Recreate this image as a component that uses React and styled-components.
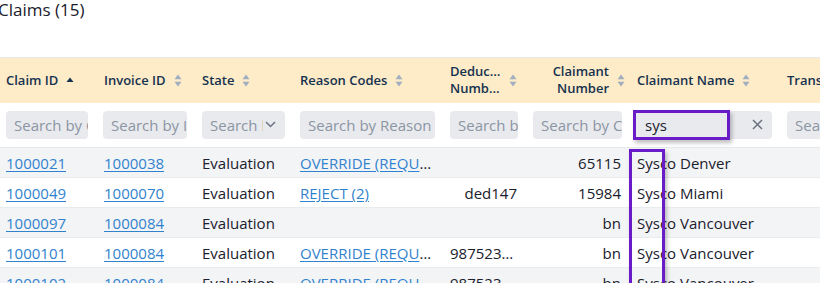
import React from "react";
import styled, { createGlobalStyle } from "styled-components";

const Global = createGlobalStyle`
  html, body {
    margin: 0;
    padding: 0;
    background: #fff;
    overflow: hidden;
    font-family: "Open Sans", "Noto Sans", sans-serif;
    color: #1a202c;
  }
`;

const Page = styled.div`
  width: 820px;
  height: 283px;
  overflow: hidden;
  position: relative;
`;

const Title = styled.h2`
  margin: 0 0 0 -2px;
  height: 57px;
  font-size: 17px;
  font-weight: 400;
  line-height: 20px;
  color: #1a202c;
`;

const Table = styled.table`
  border-collapse: collapse;
  table-layout: fixed;
  width: 931px;
  font-size: 15px;
`;

const HeadRow = styled.tr`
  background: #feebc8;
  border-top: 1px solid #e6e8ec;
  height: 45px;
`;

const Th = styled.th`
  padding: 0 6px;
  text-align: left;
  font-size: 13px;
  font-weight: 600;
  color: #15324f;
  white-space: nowrap;
  vertical-align: middle;
`;

const HeadInner = styled.div`
  display: flex;
  align-items: center;
  justify-content: ${(p) => (p.$right ? "flex-end" : "flex-start")};
  gap: 8px;
`;

const HeadLines = styled.div`
  display: flex;
  flex-direction: column;
  align-items: ${(p) => (p.$right ? "flex-end" : "flex-start")};
  line-height: 17px;
  text-align: ${(p) => (p.$right ? "right" : "left")};
`;

const Clip = styled.span`
  display: block;
  max-width: ${(p) => p.$w}px;
  overflow: hidden;
  text-overflow: ellipsis;
`;

const FilterRow = styled.tr`
  height: 45px;
  border-bottom: 1px solid #e6e8ec;
`;

const Fd = styled.td`
  padding: 0 0 0 ${(p) => p.$pl || 6}px;
  vertical-align: middle;
`;

const Field = styled.div`
  width: ${(p) => p.$w}px;
  height: 28px;
  border-radius: 4px;
  background: #e8eaee;
  display: flex;
  align-items: center;
  padding: 0 ${(p) => (p.$icon ? 9 : 0)}px 0 8px;
  box-sizing: border-box;
  color: ${(p) => (p.$filled ? "#1a202c" : "#8c95a3")};
  font-size: 15px;
  overflow: hidden;
  white-space: nowrap;
  gap: 2px;
`;

const FieldText = styled.span`
  flex: 1;
  overflow: hidden;
  padding-left: ${(p) => p.$indent || 0}px;
`;

const Row = styled.tr`
  height: 30px;
  background: ${(p) => (p.$odd ? "#f3f4f6" : "#fff")};
  border-bottom: 1px solid #e9ecef;
`;

const Td = styled.td`
  padding: 0 ${(p) => p.$pr || 6}px 0 6px;
  text-align: ${(p) => (p.$right ? "right" : "left")};
  white-space: nowrap;
  overflow: hidden;
  text-overflow: ellipsis;
  color: #1a202c;
`;

const Link = styled.a`
  color: #3182ce;
  text-decoration: underline;
  text-underline-offset: 2px;
`;

const Highlight = styled.div`
  position: absolute;
  border: 3px solid #6a1bc8;
  box-shadow: 2px 3px 4px rgba(0, 0, 0, 0.25);
  box-sizing: border-box;
  pointer-events: none;
`;

const InputMark = styled(Highlight)`
  left: 633px;
  top: 110px;
  width: 97px;
  height: 30px;
`;

const ColumnMark = styled(Highlight)`
  left: 629px;
  top: 149px;
  width: 36px;
  height: 140px;
`;

const SortIcon = ({ active }) =>
  active ? (
    <svg width="8" height="6" viewBox="0 0 8 6">
      <path d="M4 0.5 L7.5 5 L0.5 5 Z" fill="#15324f" />
    </svg>
  ) : (
    <svg width="8" height="13" viewBox="0 0 8 13">
      <path d="M4 0.5 L7.5 5.3 L0.5 5.3 Z" fill="#a0aec0" />
      <path d="M4 12.5 L7.5 7.7 L0.5 7.7 Z" fill="#a0aec0" />
    </svg>
  );

const Chevron = () => (
  <svg width="11" height="7" viewBox="0 0 11 7">
    <path d="M1 1 L5.5 5.5 L10 1" stroke="#6b7280" strokeWidth="1.5" fill="none" />
  </svg>
);

const Cross = () => (
  <svg width="11" height="11" viewBox="0 0 11 11">
    <path d="M1 1 L10 10 M10 1 L1 10" stroke="#6b7280" strokeWidth="1.5" />
  </svg>
);

const widths = [98, 98, 98, 150, 83, 104, 150, 150];

const rows = [
  ["1000021", "1000038", "Evaluation", "OVERRIDE (REQUIRES APPROVAL)", "", "65115", "Sysco Denver"],
  ["1000049", "1000070", "Evaluation", "REJECT (2)", "ded147", "15984", "Sysco Miami"],
  ["1000097", "1000084", "Evaluation", "", "", "bn", "Sysco Vancouver"],
  ["1000101", "1000084", "Evaluation", "OVERRIDE (REQUIRES APPROVAL)", "9875234567", "bn", "Sysco Vancouver"],
  ["1000102", "1000084", "Evaluation", "OVERRIDE (REQUIRES APPROVAL)", "9875234567", "bn", "Sysco Vancouver"],
];

export default function App() {
  return (
    <Page>
      <Global />
      <Title>Claims (15)</Title>
      <Table>
        <colgroup>
          {widths.map((w, i) => (
            <col key={i} style={{ width: w }} />
          ))}
        </colgroup>
        <thead>
          <HeadRow>
            <Th>
              <HeadInner>Claim ID <SortIcon active /></HeadInner>
            </Th>
            <Th>
              <HeadInner>Invoice ID <SortIcon /></HeadInner>
            </Th>
            <Th>
              <HeadInner>State <SortIcon /></HeadInner>
            </Th>
            <Th>
              <HeadInner>Reason Codes <SortIcon /></HeadInner>
            </Th>
            <Th>
              <HeadInner>
                <HeadLines>
                  <Clip $w={51}>Deduction</Clip>
                  <Clip $w={51}>Number</Clip>
                </HeadLines>
                <SortIcon />
              </HeadInner>
            </Th>
            <Th>
              <HeadInner $right>
                <HeadLines $right>
                  <span>Claimant</span>
                  <span>Number</span>
                </HeadLines>
                <SortIcon />
              </HeadInner>
            </Th>
            <Th>
              <HeadInner>Claimant Name <SortIcon /></HeadInner>
            </Th>
            <Th>
              <HeadInner>Transaction Date <SortIcon /></HeadInner>
            </Th>
          </HeadRow>
          <FilterRow>
            <Fd>
              <Field $w={82}><FieldText>Search by Claim ID</FieldText></Field>
            </Fd>
            <Fd $pl={5}>
              <Field $w={84}><FieldText>Search by Invoice ID</FieldText></Field>
            </Fd>
            <Fd>
              <Field $w={83} $icon>
                <FieldText>Search by State</FieldText>
                <Chevron />
              </Field>
            </Fd>
            <Fd>
              <Field $w={135}><FieldText>Search by Reason Codes</FieldText></Field>
            </Fd>
            <Fd>
              <Field $w={68}><FieldText>Search by Deduction</FieldText></Field>
            </Fd>
            <Fd>
              <Field $w={89}><FieldText>Search by Claimant</FieldText></Field>
            </Fd>
            <Fd $pl={2}>
              <Field $w={139} $filled $icon>
                <FieldText $indent={4}>sys</FieldText>
                <Cross />
              </Field>
            </Fd>
            <Fd>
              <Field $w={120}><FieldText>Search by Date</FieldText></Field>
            </Fd>
          </FilterRow>
        </thead>
        <tbody>
          {rows.map((r, i) => (
            <Row key={r[0]} $odd={i % 2 === 0}>
              <Td><Link>{r[0]}</Link></Td>
              <Td><Link>{r[1]}</Link></Td>
              <Td>{r[2]}</Td>
              <Td $pr={12}>{r[3] && <Link>{r[3]}</Link>}</Td>
              <Td $right $pr={10}>{r[4]}</Td>
              <Td $right $pr={10}>{r[5]}</Td>
              <Td>{r[6]}</Td>
              <Td />
            </Row>
          ))}
        </tbody>
      </Table>
      <InputMark />
      <ColumnMark />
    </Page>
  );
}
